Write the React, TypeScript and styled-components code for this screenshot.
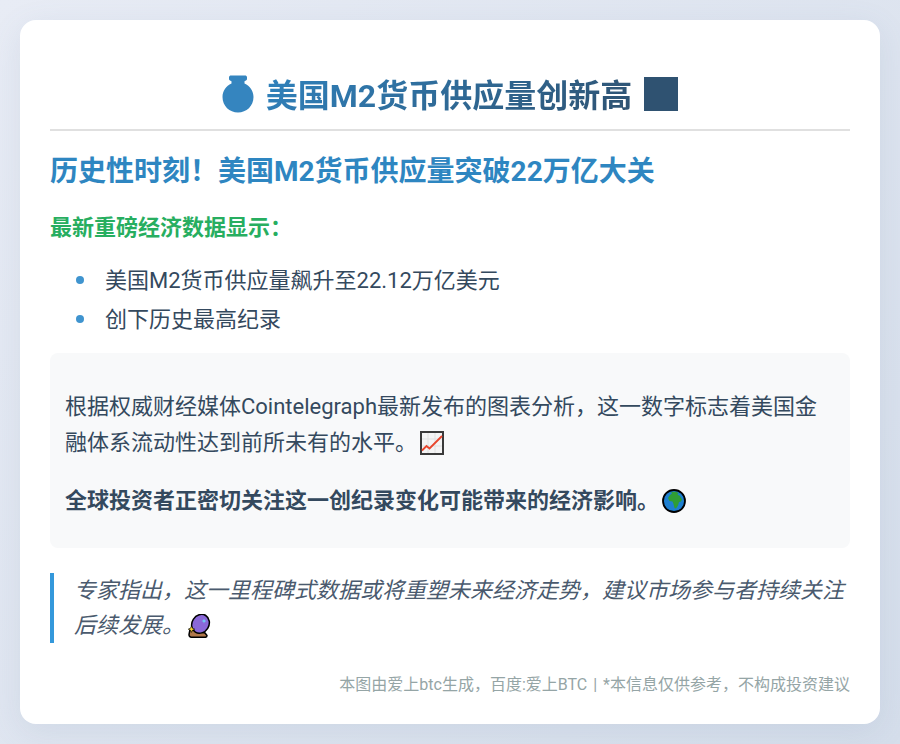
import React from "react";
import styled, { createGlobalStyle } from "styled-components";

const GlobalStyle = createGlobalStyle`
  html, body {
    margin: 0;
    padding: 0;
  }
  body {
    background: linear-gradient(135deg, #e8ecf5 0%, #d5deeb 100%);
    font-family: Roboto, "Noto Sans CJK SC", sans-serif;
    color: #34495e;
  }
`;

function BagIcon() {
  return (
    <TitleIcon width="32" height="38" viewBox="0 0 32 38">
      <path
        fill="#3585bf"
        d="M7 2.500C7 1 8 .5 9 .5h14c1 0 2 .5 2 2v1.500c0 1-1 1.800-2.500 2.300v2.200C28 11 31.500 16 31.500 22c0 9-7 15.500-15.500 15.500S.5 31 .5 22c0-6 3.500-11 9-13.500V6.300C8 5.800 7 5 7 4z"
      />
    </TitleIcon>
  );
}

function BarsIcon() {
  return (
    <TitleIcon width="34" height="34" viewBox="0 0 34 34">
      <rect width="34" height="34" fill="#2f5271" />
    </TitleIcon>
  );
}

function ChartIcon() {
  return (
    <InlineIcon width="24" height="24" viewBox="0 0 24 24">
      <rect x="1" y="1" width="22" height="22" fill="#f4f4f4" stroke="#3a3a3a" strokeWidth="2" />
      <path d="M8 2v20M15 2v20M2 8h20M2 15h20" stroke="#e0e0e0" strokeWidth="1" />
      <path d="M2 19.500l4.500-4.500 3 2.500L22 5" fill="none" stroke="#e8452c" strokeWidth="1.800" />
    </InlineIcon>
  );
}

function GlobeIcon() {
  return (
    <InlineIcon width="24" height="24" viewBox="0 0 24 24">
      <circle cx="12" cy="12" r="11" fill="#1e7fd0" stroke="#000" strokeWidth="1.800" />
      <path
        fill="#2f9e35"
        d="M8 3.500c3-1 6.500-1 8.500.5l-1 2 2 .5 2.500 4-1 2-2 .5-1 3.500-2 3-1.500-.5-1-4-1-2.500-3-.5-1.500-3 2-3 2-1.500-1-1.500z"
      />
    </InlineIcon>
  );
}

function CrystalIcon() {
  return (
    <InlineIcon width="24" height="24" viewBox="0 0 24 24">
      <path d="M3 15.500l15 3.500 2 2.500c0 1-.7 1.800-2 1.800H5.500C3.500 23.300 2 22 2 20.500z" fill="#b0784a" stroke="#000" strokeWidth="1.500" />
      <ellipse cx="13.500" cy="9.800" rx="8.500" ry="9.800" transform="rotate(32 13.500 9.800)" fill="#8a68d8" stroke="#000" strokeWidth="1.500" />
      <path d="M17 4.500l.7 1.800 1.800.7-1.800.7-.7 1.800-.7-1.800-1.800-.7 1.800-.7z" fill="#6fd0f5" />
      <path d="M4.500 12l1 2.200 2.300 1-2.300 1-1 2.200-1-2.200-2.300-1 2.300-1z" fill="#f6d32d" stroke="#000" strokeWidth=".6" />
    </InlineIcon>
  );
}

export default function App() {
  return (
    <>
      <GlobalStyle />
      <Page>
        <Card>
          <Title>
            <BagIcon />
            <TitleText>美国M2货币供应量创新高</TitleText>
            <BarsIcon />
          </Title>
          <Headline>历史性时刻！美国M2货币供应量突破22万亿大关</Headline>
          <SubHeading>最新重磅经济数据显示：</SubHeading>
          <BulletList>
            <BulletItem>美国M2货币供应量飙升至22.12万亿美元</BulletItem>
            <BulletItem>创下历史最高纪录</BulletItem>
          </BulletList>
          <InfoBox>
            <Paragraph>
              根据权威财经媒体Cointelegraph最新发布的图表分析，这一数字标志着美国金融体系流动性达到前所未有的水平。
              <ChartIcon />
            </Paragraph>
            <Paragraph>
              <strong>全球投资者正密切关注这一创纪录变化可能带来的经济影响。</strong>
              <GlobeIcon />
            </Paragraph>
          </InfoBox>
          <Quote>
            专家指出，这一里程碑式数据或将重塑未来经济走势，建议市场参与者持续关注后续发展。
            <CrystalIcon />
          </Quote>
          <Footer>本图由爱上btc生成，百度:爱上BTC | *本信息仅供参考，不构成投资建议</Footer>
        </Card>
      </Page>
    </>
  );
}

const Page = styled.div`
  box-sizing: border-box;
  width: 900px;
  height: 744px;
  padding: 20px;
`;

const Card = styled.div`
  box-sizing: border-box;
  height: 704px;
  padding: 30px;
  background: #ffffff;
  border-radius: 16px;
  box-shadow: 0 8px 32px rgba(100, 120, 160, 0.12);
`;

const Title = styled.h1`
  display: flex;
  align-items: center;
  justify-content: center;
  gap: 12px;
  box-sizing: border-box;
  height: 81px;
  margin: 0;
  padding-top: 9px;
  border-bottom: 2px solid #e0e0e0;
  font-size: 32px;
  font-weight: 700;
`;

const TitleText = styled.span`
  margin-bottom: 3px;
  background: linear-gradient(135deg, #2f82bd, #2f5271);
  -webkit-background-clip: text;
  background-clip: text;
  color: transparent;
`;

const TitleIcon = styled.svg`
  flex: none;
`;

const Headline = styled.h2`
  margin: 22px 0 0;
  color: #2e86c1;
  font-size: 28px;
  line-height: 38px;
  font-weight: 700;
`;

const SubHeading = styled.h3`
  margin: 22px 0 0;
  color: #27ae60;
  font-size: 22px;
  line-height: 30px;
  font-weight: 700;
`;

const BulletList = styled.ul`
  list-style: none;
  margin: 18px 0 0;
  padding: 0;
`;

const BulletItem = styled.li`
  position: relative;
  padding-left: 55px;
  font-size: 22px;
  line-height: 39px;

  &::before {
    content: "";
    position: absolute;
    left: 26px;
    top: 15px;
    width: 8px;
    height: 8px;
    border-radius: 50%;
    background: #3f94cf;
  }
`;

const InfoBox = styled.div`
  margin-top: 14px;
  padding: 36px 15px 29px;
  background: #f8f9fa;
  border-radius: 8px;
`;

const Paragraph = styled.p`
  margin: 0 0 22px;
  font-size: 22px;
  line-height: 36px;

  &:last-child {
    margin-bottom: 0;
  }
`;

const InlineIcon = styled.svg`
  display: inline-block;
  margin-left: 3px;
  vertical-align: -5px;
`;

const Quote = styled.blockquote`
  margin: 25px 0 0;
  padding-left: 20px;
  border-left: 4px solid #3498db;
  font-size: 22px;
  line-height: 35px;
  font-style: italic;
  color: #4a5a6e;
`;

const Footer = styled.div`
  margin-top: 30px;
  color: #95a5a6;
  font-size: 16px;
  line-height: 24px;
  word-spacing: 2px;
  text-align: right;
`;
